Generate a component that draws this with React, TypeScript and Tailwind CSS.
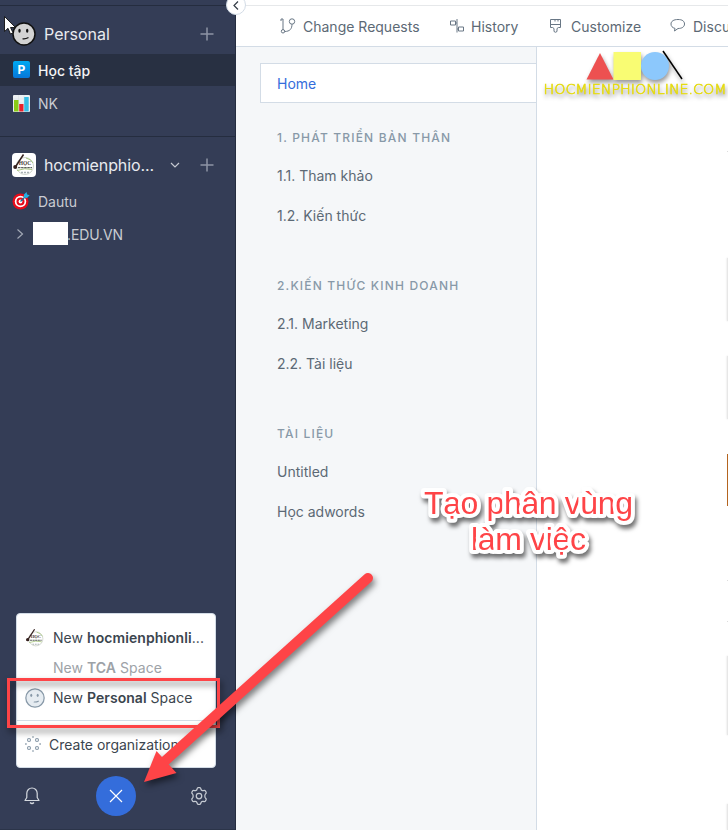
import React from "react";

const Face = ({ size, fill, stroke, sw }: { size: number; fill: string; stroke: string; sw: number }) => (
  <svg width={size} height={size} viewBox="0 0 24 24" fill="none" className="shrink-0">
    <circle cx="12" cy="12" r="11" fill={fill} stroke={stroke} strokeWidth={sw} />
    <ellipse cx="7.5" cy="8.800" rx="1.200" ry="2" fill={stroke} />
    <ellipse cx="15.2" cy="8.800" rx="1.200" ry="2" fill={stroke} />
    <path d="M11 16.800c2 .2 3.600-.2 5-1" stroke={stroke} strokeWidth="1.300" strokeLinecap="round" />
  </svg>
);

const OrgLogo = ({ size }: { size: number }) => (
  <svg width={size} height={size} viewBox="0 0 24 24" className="shrink-0 rounded-[4px] bg-white">
    <circle cx="13" cy="13" r="8.500" fill="none" stroke="#c3c9bd" strokeWidth=".8" />
    <path d="M5 17.500q8-3 15-1M14 5q5 1 7 5" stroke="#a9c680" strokeWidth="1" fill="none" />
    <path d="M11.500 1.500 4 13" stroke="#35211e" strokeWidth="1.500" />
    <circle cx="3.200" cy="14" r="2" fill="#35211e" />
    <text x="6.800" y="12.300" fontSize="5.500" fontWeight="700" fontFamily="Liberation Serif, serif" fill="#4a403b">HỌC</text>
    <path d="M6 14.600h14" stroke="#5b605c" strokeWidth="1.300" strokeDasharray="2.500 .6" />
    <path d="M9 19.500h8" stroke="#a9b1b5" strokeWidth="1.300" strokeDasharray="2 1" />
  </svg>
);

const Plus = () => (
  <svg width="14" height="14" viewBox="0 0 14 14" stroke="#8d94a5" strokeWidth="1.500"><path d="M7 .5v13M.5 7h13" /></svg>
);

const Row = ({ children, className = "" }: { children: React.ReactNode; className?: string }) => (
  <div className={`flex items-center ${className}`}>{children}</div>
);

function Sidebar() {
  return (
    <aside className="flex h-full w-[236px] shrink-0 flex-col border-r border-[#252d40] bg-[#343d56] text-[14px] text-[#c9ccd2]">
      <div className="h-[6px] shrink-0 border-b border-[#252d3f]" />
      <Row className="h-[48px] shrink-0 pr-[21px] pl-[12px] pt-[8px]">
        <Face size={24} fill="#d3d3d3" stroke="#111" sw={1.5} />
        <span className="ml-2 flex-1 text-[16px] text-[#e9ebef]">Personal</span>
        <Plus />
      </Row>
      <Row className="h-[32px] shrink-0 bg-[#283042] pl-[13px] font-medium text-[#f3f4f6]">
        <span className="mb-px flex size-[17px] items-center justify-center rounded-[2px] bg-linear-to-b from-[#00a9f2] to-[#0877d8] text-[12px] font-bold text-white">P</span>
        <span className="ml-2">Học tập</span>
      </Row>
      <Row className="h-[34px] shrink-0 pl-[13px]">
        <svg width="17" height="17" viewBox="0 0 17 17">
          <rect width="17" height="17" rx="1" fill="#edf1f3" />
          <path d="M0 4h17M0 8h17M0 12h17M5.500 0v17M11 0v17" stroke="#d6dee3" strokeWidth=".5" />
          <rect x="1" y="5" width="4.500" height="11.500" fill="#8acb16" />
          <rect x="6.200" y="9" width="4.300" height="7.500" fill="#e8212b" />
          <rect x="11.200" y="2" width="4.500" height="14.500" fill="#35bde4" />
        </svg>
        <span className="ml-2 pt-px">NK</span>
      </Row>
      <div className="h-[17px] shrink-0 border-b border-[#252d3f]" />
      <Row className="h-[48px] shrink-0 pt-[8px] pr-[21px] pl-[12px]">
        <OrgLogo size={24} />
        <span className="ml-2 w-[126px] text-[16px] tracking-[-0.1px] text-[#e9ebef]">hocmienphio...</span>
        <svg width="10" height="6" viewBox="0 0 10 6" fill="none" stroke="#c5c9d1" strokeWidth="1.200"><path d="m1 1 4 4 4-4" /></svg>
        <span className="ml-auto"><Plus /></span>
      </Row>
      <Row className="h-[32px] shrink-0 pl-[12px]">
        <svg width="18" height="18" viewBox="0 0 18 18">
          <circle cx="8.500" cy="9.500" r="8" fill="#e60b19" />
          <circle cx="8.500" cy="9.500" r="5.700" fill="#fff" />
          <circle cx="8.500" cy="9.500" r="4" fill="#e60b19" />
          <circle cx="8.500" cy="9.500" r="1.900" fill="#fff" />
          <path d="m8.500 9.500 5-5" stroke="#176f9c" strokeWidth="1.200" />
          <path d="m11.500 5.500.5-3L14.500 0l.6 2.600 2.600.6L15 6z" fill="#25aee1" />
        </svg>
        <span className="ml-2">Dautu</span>
      </Row>
      <Row className="h-[34px] shrink-0 pb-px pl-[16px]">
        <svg width="8" height="12" viewBox="0 0 8 12" fill="none" stroke="#a2a8b5" strokeWidth="1.200"><path d="m1.500 1.500 5 4.500-5 4.500" /></svg>
        <span className="ml-[9px] h-[23px] w-[35px] bg-white" />
        <span className="-ml-px pt-px tracking-[-0.1px]">.EDU.VN</span>
      </Row>
      <div className="mt-auto ml-[16px] flex h-[155px] w-[200px] shrink-0 flex-col rounded-[4px] border border-[#d3dce6] bg-white pt-[9px] text-[14px] text-[#3b454e]">
        <Row className="h-[30px] pb-px pl-[8px]">
          <OrgLogo size={20} /><span className="ml-2 tracking-[0.06px]">New <b className="font-semibold">hocmienphionli</b>...</span>
        </Row>
        <Row className="h-[30px] pl-[36px] text-[#9da2a7]"><span className="pb-px tracking-[0.04px]">New <b className="font-semibold">TCA</b> Space</span></Row>
        <Row className="h-[30px] pb-px pl-[8px]">
          <Face size={20} fill="#e6ecf1" stroke="#8899a8" sw={1.500} /><span className="ml-2 tracking-[0.04px]">New <b className="font-semibold">Personal</b> Space</span>
        </Row>
        <div className="mt-[7px] h-px shrink-0 bg-[#d3dce6]" />
        <Row className="h-[46px] pl-[8px]">
          <svg width="16" height="16" viewBox="0 0 16 16" fill="none" stroke="#8899a8" strokeWidth="1.100">
            <circle cx="4" cy="4" r="1.500" /><circle cx="12" cy="4" r="1.500" /><circle cx="4" cy="12" r="1.500" /><circle cx="12" cy="12" r="1.500" />
            <path strokeWidth="1.500" d="M7.300.9h1.400M7.300 15.100h1.400M.9 7.300v1.400M15.100 7.300v1.400" />
          </svg>
          <span className="ml-2">Create organization</span>
        </Row>
      </div>
      <Row className="h-[61px] shrink-0 justify-between pt-[1px] pr-[26px] pb-[6px] pl-[24px]">
        <svg width="16" height="18" viewBox="0 0 16 18" fill="none" stroke="#d5d9df" strokeWidth="1.200" strokeLinejoin="round"><path d="M1 13.500h14l-1.800-3V6.200a5.200 5.200 0 0 0-10.400 0v4.300zM6 15.500q2 2 4 0" /></svg>
        <span className="ml-[3px] flex size-10 items-center justify-center rounded-full bg-[#346ddb]">
          <svg width="14" height="14" viewBox="0 0 14 14" stroke="#fff" strokeWidth="1.200"><path d="m1 1 12 12M13 1 1 13" /></svg>
        </span>
        <svg width="20" height="20" viewBox="0 0 24 24" fill="none" stroke="#c5cad2" strokeWidth="1.500" strokeLinejoin="round">
          <circle cx="12" cy="12" r="3.300" />
          <path d="M9.600 3.900c.3-1.300.6-1.900 1.400-1.900h2c.8 0 1.100.6 1.400 1.900.3 1.200 1.600 1.900 2.800 1.600 1.300-.4 2-.4 2.400.3l1 1.700c.4.700.1 1.300-.9 2.200-.9.900-.9 3.700 0 4.600 1 .9 1.300 1.500.9 2.200l-1 1.700c-.4.700-1.100.7-2.400.3-1.200-.3-2.500.4-2.800 1.600-.3 1.300-.6 1.900-1.400 1.900h-2c-.8 0-1.100-.6-1.400-1.900-.3-1.200-1.600-1.900-2.800-1.600-1.300.4-2 .4-2.400-.3l-1-1.700c-.4-.7-.1-1.300.9-2.200.9-.9.9-3.700 0-4.600-1-.9-1.300-1.500-.9-2.200l1-1.700c.4-.7 1.100-.7 2.400-.3 1.200.3 2.500-.4 2.800-1.600z" />
        </svg>
      </Row>
      <div className="h-px shrink-0 bg-[#2b3449]" />
    </aside>
  );
}

function Toolbar() {
  return (
    <header className="flex h-[47px] w-full shrink-0 flex-col border-b border-[#d3dce6] bg-white">
      <div className="h-[6px] shrink-0 border-b border-[#e6e8ea]" />
      <div className="flex flex-1 items-center pt-px pl-[44px] text-[14px] whitespace-nowrap text-[#5c6975]">
        <svg width="16" height="16" viewBox="0 0 16 16" fill="none" stroke="#697785" className="mb-0.5 shrink-0"><path d="M3 1v11M1 3V1h2M12 6.200c0 4.500-2 7.300-7.500 7.300" /><circle cx="12" cy="3.500" r="2.700" /><circle cx="3" cy="13.300" r="1.700" /></svg>
        <span className="ml-[7px] w-[117px] shrink-0">Change Requests</span>
        <svg width="16" height="16" viewBox="0 0 16 16" fill="none" stroke="#697785" className="mb-0.5 ml-[29px] shrink-0"><path d="M1.500 3h5v4h-5zM9.500 9h5v4h-5zM6.500 5h1.500V1M8 5v9.500M8 11h1.500" /></svg>
        <span className="ml-[6px] w-[48px] shrink-0">History</span>
        <svg width="14" height="16" viewBox="0 0 14 16" fill="none" stroke="#697785" className="mb-0.5 ml-[30px] shrink-0"><path d="M1.500 1.500h10v8h-2l-1.500 1v3q-1.500 1.500-3 0v-3l-1.500-1h-2zM1.500 6.500h10M6 1v2.500M9 1v2.500" /></svg>
        <span className="ml-[8px] w-[70px] shrink-0">Customize</span>
        <svg width="16" height="15" viewBox="0 0 16 15" fill="none" stroke="#697785" className="mb-0.5 ml-[29px] shrink-0"><path d="M5 10.400C2.300 9.700 1 8.200 1 6c0-2.800 2.700-4.500 7-4.500S14.500 3.200 14.500 6 12 10.500 8 10.500L4.500 13z" /></svg>
        <span className="ml-[7px]">Discu</span>
      </div>
    </header>
  );
}

const sections = [
  { title: "1. PHÁT TRIỂN BẢN THÂN", items: ["1.1. Tham khảo", "1.2. Kiến thức"] },
  { title: "2.KIẾN THỨC KINH DOANH", items: ["2.1. Marketing", "2.2. Tài liệu"] },
  { title: "TÀI LIỆU", items: ["Untitled", "Học adwords"] },
];

function PageNav() {
  return (
    <nav className="w-[301px] shrink-0 border-r border-[#d3dce6] bg-[#f5f7f9] pt-[16px] pl-[24px]">
      <div className="flex h-[40px] items-center border border-r-0 border-[#d3dce6] bg-white pl-[16px] text-[14px] text-[#346ddb]">Home</div>
      {sections.map((s) => (
        <section key={s.title} className="h-[148px] pt-[25px] pl-[17px]">
          <h2 className="flex h-[20px] items-center text-[12px] font-medium tracking-[1.180px] text-[#8899a8]">{s.title}</h2>
          <div className="pt-[7px]">
            {s.items.map((item) => (
              <div key={item} className="flex h-[40px] items-center text-[14px] text-[#5c6975]">{item}</div>
            ))}
          </div>
        </section>
      ))}
    </nav>
  );
}

function Content() {
  return (
    <main className="flex min-w-0 flex-1 flex-col bg-white">
      <svg width="191" height="60" viewBox="537 47 191 60" className="shrink-0">
        <g className="drop-shadow-[1px_3px_2px_rgba(0,0,0,0.4)]">
          <path d="m600 53 13.500 26.500h-27z" fill="#ed5050" />
          <path d="M613.500 52H641v28h-27.500z" fill="#f9fc73" />
          <circle cx="655" cy="66" r="14" fill="#8cc8fc" />
          <path d="m663 51 19 28" stroke="#000" strokeWidth="1.500" />
          <text x="543.500" y="94" textLength="183" lengthAdjust="spacingAndGlyphs" fontSize="13.500" fontFamily="DejaVu Sans, sans-serif" fontWeight="200" fill="#e5db13" stroke="#e5db13" strokeWidth=".6">HOCMIENPHIONLINE.COM</text>
        </g>
      </svg>
      <div className="flex flex-1 flex-col items-end">
        <div className="mt-[44px] h-px w-px bg-[#ddd]" />
        <div className="mt-[106px] h-[63px] w-px bg-[#e7e7e7] shadow-[0_0_2px_#ccc]" />
        <div className="mt-[35px] h-[63px] w-px bg-[#e7e7e7] shadow-[0_0_2px_#ccc]" />
        <div className="mt-[35px] h-[52px] w-px bg-[#b4641f]" />
        <div className="mt-[74px] h-px w-px bg-[#ddd]" />
        <div className="mt-[40px] h-px w-px bg-[#ddd]" />
        <div className="mt-[34px] h-[79px] w-px bg-[#e7e7e7] shadow-[0_0_2px_#ccc]" />
        <div className="mt-[69px] w-px flex-1 bg-[#e7e7e7] shadow-[0_0_2px_#ccc]" />
      </div>
    </main>
  );
}

function Annotations() {
  return (
    <>
      <div className="absolute top-[-5px] left-[226px] flex size-[20px] items-center justify-center rounded-full border border-[#d3dce6] bg-white">
        <svg width="6" height="9" viewBox="0 0 6 9" fill="none" stroke="#333c46" strokeWidth="1.200"><path d="m5 .5-4 4 4 4" /></svg>
      </div>
      <svg className="absolute top-[16px] left-[4px]" width="13" height="20" viewBox="0 0 13 20"><path d="M.5.5v15l3.500-3.200 2.500 5.700 2.500-1.200-2.500-5.300h5z" fill="#fff" stroke="#111" strokeWidth=".9" /></svg>
      <svg className="absolute inset-0" width="728" height="830" viewBox="0 0 728 830">
        <g className="drop-shadow-[2px_4px_3px_rgba(0,0,0,0.5)]">
          <rect x="8.500" y="679.500" width="210" height="47" fill="none" stroke="#fe4447" strokeWidth="3" />
        </g>
        <g className="drop-shadow-[2px_4px_3px_rgba(0,0,0,0.5)]">
          <path d="M368 578 165 761" stroke="#fe4447" strokeWidth="10" strokeLinecap="round" />
          <path d="m144 782 12.500-31 20 22z" fill="#fe4447" />
        </g>
        <g className="drop-shadow-[2px_4px_2px_rgba(0,0,0,0.55)]" fontFamily="Liberation Sans, sans-serif" fontSize="32" fill="#fe4447" stroke="#fff" strokeWidth="8" strokeLinejoin="round" paintOrder="stroke">
          <text x="424" y="514" textLength="209">Tạo phân vùng</text>
          <text x="471" y="550" textLength="115">làm việc</text>
        </g>
      </svg>
    </>
  );
}

export default function App() {
  return (
    <div className="relative flex h-[830px] w-[728px] overflow-hidden bg-white font-['Inter',sans-serif]">
      <Sidebar />
      <div className="flex min-w-0 flex-1 flex-col">
        <Toolbar />
        <div className="flex min-h-0 flex-1"><PageNav /><Content /></div>
      </div>
      <Annotations />
    </div>
  );
}
